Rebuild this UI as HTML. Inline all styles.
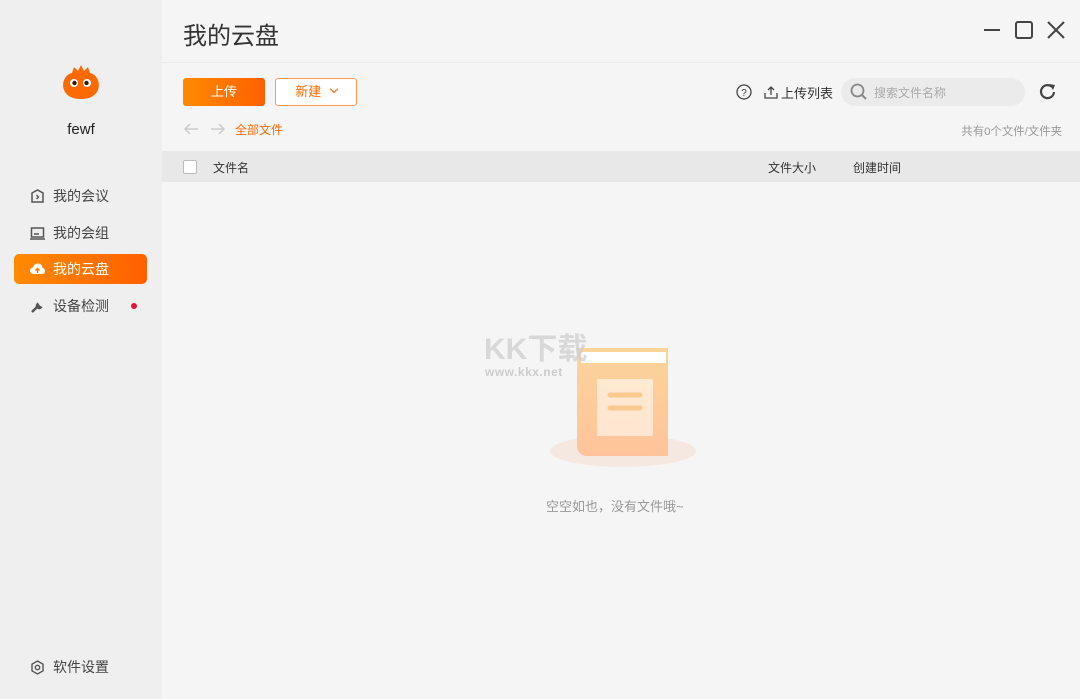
<!DOCTYPE html>
<html><head><meta charset="utf-8"><style>
*{margin:0;padding:0;box-sizing:border-box}
body{width:1080px;height:699px;overflow:hidden;background:#f5f5f5;font-family:"Liberation Sans","Noto Sans CJK SC",sans-serif;position:relative;color:#333}
.side{position:absolute;left:0;top:0;width:162px;height:699px;background:#efefef}
.a{position:absolute}
.nav{position:absolute;left:14px;width:133px;height:30px;border-radius:5px;font-size:14px;color:#444;display:flex;align-items:center;padding-left:16px}
.nav svg{margin-right:8px}
.act{background:linear-gradient(90deg,#ff8a00,#ff6000);color:#fff}
</style></head><body>
<div class="side">
 <svg class="a" style="left:60px;top:64px" width="42" height="36" viewBox="0 0 42 36"><path d="M4 26C1 18 6 10 12 9L14 3 18 7 21 1 24 7 28 3 30 9C36 10 41 18 38 26 35 33 28 35 21 35 14 35 7 33 4 26Z" fill="#ff6a00"/><circle cx="14" cy="19" r="4" fill="#fff"/><circle cx="27" cy="19" r="4" fill="#fff"/><circle cx="14.5" cy="19" r="2.2" fill="#3a1a00"/><circle cx="26.5" cy="19" r="2.2" fill="#3a1a00"/></svg>
 <div class="a" style="left:0;width:162px;top:121px;text-align:center;font-size:15px;color:#222">fewf</div>
 <div class="nav" style="top:181px"><svg width="15" height="15" viewBox="0 0 15 15"><path d="M2 4L7.5 1 13 4V13H2Z" fill="none" stroke="#555" stroke-width="1.5"/><path d="M6.5 6L8.5 8 6.5 10" fill="none" stroke="#555" stroke-width="1.4"/></svg>我的会议</div>
 <div class="nav" style="top:218px"><svg width="15" height="15" viewBox="0 0 15 15"><rect x="1.5" y="2" width="12" height="9" fill="none" stroke="#555" stroke-width="1.5"/><path d="M0 13H15M4 8H9" stroke="#555" stroke-width="1.5"/></svg>我的会组</div>
 <div class="nav act" style="top:254px"><svg width="15" height="15" viewBox="0 0 15 15"><path d="M4 12C1 12 0 10 0 8.5 0 7 1.5 5.5 3 5.5 3.5 3 5.5 1.5 8 1.5 11 1.5 12.5 4 12.5 6 14 6 15 7.5 15 9 15 10.5 14 12 12 12Z" fill="#fff"/><path d="M7.5 11V6.5M5.5 8.5L7.5 6.5 9.5 8.5" stroke="#ff7a00" stroke-width="1.5" fill="none"/></svg>我的云盘</div>
 <div class="nav" style="top:291px"><svg width="15" height="15" viewBox="0 0 15 15"><path d="M2 13L8 7" stroke="#555" stroke-width="2.5"/><path d="M8 3.5A3.5 3.5 0 1 0 12.5 8L10.5 7 9 5.5Z" fill="#555"/></svg>设备检测</div>
 <div class="a" style="left:131px;top:303px;width:6px;height:6px;border-radius:3px;background:#e0143c"></div>
 <div class="nav" style="top:652px"><svg width="15" height="15" viewBox="0 0 15 15"><path d="M7.5 1L13 4.2V10.8L7.5 14 2 10.8V4.2Z" fill="none" stroke="#555" stroke-width="1.4"/><circle cx="7.5" cy="7.5" r="2.2" fill="none" stroke="#555" stroke-width="1.4"/></svg>软件设置</div>
</div>
<div class="a" style="left:183px;top:16px;font-size:24px;color:#333">我的云盘</div>
<svg class="a" style="left:982px;top:19px" width="85" height="22"><path d="M2 11H18" stroke="#444" stroke-width="2"/><rect x="34" y="3" width="16" height="16" rx="2" fill="none" stroke="#444" stroke-width="2"/><path d="M66 3L82 19M82 3L66 19" stroke="#444" stroke-width="2"/></svg>
<div class="a" style="left:162px;top:62px;width:918px;height:1px;background:#ececec"></div>
<div class="a" style="left:183px;top:78px;width:82px;height:28px;border-radius:3px;background:linear-gradient(90deg,#ff8a00,#ff6000);color:#fff;font-size:13px;text-align:center;line-height:28px">上传</div>
<div class="a" style="left:275px;top:78px;width:82px;height:28px;border-radius:3px;border:1px solid #ff9a50;background:#fff;color:#ff6a00;font-size:13px;text-align:center;line-height:26px">新建 <span style="display:inline-block;width:6px;height:6px;border-right:1px solid #ff6a00;border-bottom:1px solid #ff6a00;transform:rotate(45deg);margin:0 0 4px 6px"></span></div>
<svg class="a" style="left:183px;top:120px" width="45" height="18"><path d="M2 9H15M7 4L2 9 7 14M28 9H41M36 4L41 9 36 14" stroke="#ccc" stroke-width="1.5" fill="none"/></svg>
<div class="a" style="left:235px;top:121px;font-size:12px;color:#ff6a00">全部文件</div>
<svg class="a" style="left:736px;top:84px" width="16" height="16"><circle cx="8" cy="8" r="7" fill="none" stroke="#444" stroke-width="1.3"/><text x="8" y="12" font-size="10" text-anchor="middle" fill="#444" font-family="Liberation Sans">?</text></svg>
<svg class="a" style="left:764px;top:85px" width="14" height="14"><path d="M1 8V13H13V8M7 10V2M4 5L7 2 10 5" fill="none" stroke="#444" stroke-width="1.3"/></svg>
<div class="a" style="left:781px;top:83px;font-size:13px;color:#333">上传列表</div>
<div class="a" style="left:841px;top:78px;width:184px;height:28px;border-radius:14px;background:#ebebeb"></div>
<svg class="a" style="left:850px;top:83px" width="18" height="18"><circle cx="7.5" cy="7.5" r="6" fill="none" stroke="#888" stroke-width="1.8"/><path d="M12 12L16 16" stroke="#888" stroke-width="2"/></svg>
<div class="a" style="left:874px;top:84px;font-size:12px;color:#aaa">搜索文件名称</div>
<svg class="a" style="left:1038px;top:82px" width="20" height="20"><path d="M16 10A6.5 6.5 0 1 1 13.5 4.5" fill="none" stroke="#444" stroke-width="2.2"/><path d="M11 2L17 3 15 8Z" fill="#444"/></svg>
<div class="a" style="right:18px;top:122px;font-size:12px;color:#999;transform-origin:right;transform:scale(0.95)">共有0个文件/文件夹</div>
<div class="a" style="left:162px;top:151px;width:918px;height:31px;background:#e8e8e8"></div>
<div class="a" style="left:183px;top:160px;width:14px;height:14px;border:1px solid #bbb;border-radius:2px;background:#fff"></div>
<div class="a" style="left:213px;top:159px;font-size:12px;color:#333">文件名</div>
<div class="a" style="left:768px;top:159px;font-size:12px;color:#333">文件大小</div>
<div class="a" style="left:853px;top:159px;font-size:12px;color:#333">创建时间</div>
<svg class="a" style="left:548px;top:338px" width="150" height="132"><ellipse cx="75" cy="113" rx="73" ry="16" fill="#f5e8e0"/><defs><linearGradient id="g" x1="0" y1="0" x2="0" y2="1"><stop offset="0" stop-color="#fcd49a"/><stop offset="1" stop-color="#fec39a"/></linearGradient></defs><path d="M29 10H120V118H39A10 10 0 0 1 29 108Z" fill="url(#g)"/><path d="M33 14H118V25H33Z" fill="#fff"/><rect x="49" y="41" width="56" height="57" rx="2" fill="#fff" opacity=".55"/><path d="M62 57H92M62 70H92" stroke="#fbc98e" stroke-width="5" stroke-linecap="round"/></svg>
<div class="a" style="left:484px;top:324px;font-size:30px;font-weight:bold;color:#cfcfcf;opacity:.75">KK下载</div>
<div class="a" style="left:485px;top:365px;font-size:12px;font-weight:bold;color:#ccc;letter-spacing:.5px">www.kkx.net</div>
<div class="a" style="left:546px;top:496px;font-size:13px;color:#999">空空如也，没有文件哦~</div>
</body></html>
